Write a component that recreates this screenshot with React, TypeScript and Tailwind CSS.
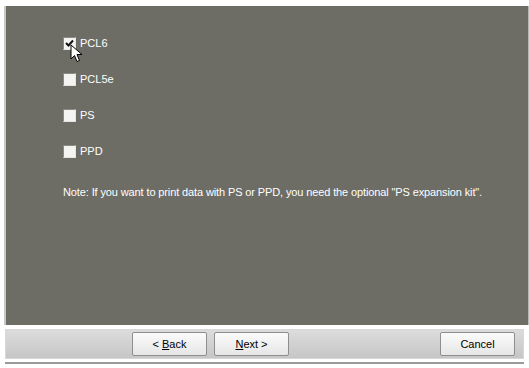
import React from "react";

function Box({ checked }: { checked?: boolean }) {
  return (
    <span className="relative flex h-[13px] w-[13px] shrink-0 items-center justify-center border border-t-[#8a8a85] border-l-[#8a8a85] border-r-[#e4e4e0] border-b-[#e4e4e0] bg-[#f4f4f2]">
      {checked && (
        <svg width="9" height="9" viewBox="0 0 9 9">
          <path d="M1 4 L3.5 6.5 L8 1.5" stroke="#111" strokeWidth="2" fill="none" />
        </svg>
      )}
    </span>
  );
}

function Option({ label, checked }: { label: string; checked?: boolean }) {
  return (
    <div className="flex h-[13px] items-center gap-[4px] text-[11px] leading-[13px] text-white">
      <Box checked={checked} />
      <span>{label}</span>
    </div>
  );
}

function Btn({ children }: { children: React.ReactNode }) {
  return (
    <button className="flex h-[24px] w-[75px] items-center justify-center rounded-[2px] border border-[#8e8e8e] bg-gradient-to-b from-[#fbfbfb] to-[#e6e6e6] text-[11px] text-black">
      {children}
    </button>
  );
}

export default function App() {
  return (
    <div
      className="relative h-[368px] w-[529px] overflow-hidden bg-white"
      style={{ fontFamily: "Tahoma, 'Liberation Sans', Arial, sans-serif" }}
    >
      <div className="flex h-[325px] pt-[6px] pl-[4px]">
        <div className="w-[2px] bg-[#c8c8c4]" />
        <div className="flex flex-1 flex-col bg-[#6d6d66] pl-[57px] pt-[31px]">
          <div className="flex flex-col gap-[23px]">
            <Option label="PCL6" checked />
            <Option label="PCL5e" />
            <Option label="PS" />
            <Option label="PPD" />
          </div>
          <p className="mt-[28px] text-[11px] leading-[13px] tracking-[-0.12px] text-white">
            Note: If you want to print data with PS or PPD, you need the optional "PS expansion kit".
          </p>
        </div>
        <div className="w-[1px] bg-[#b8b8b4]" />
      </div>
      <div className="mx-[5px] mt-[4px] flex h-[30px] items-center border border-[#d8d8d8] bg-gradient-to-b from-[#dcdcdc] to-[#c6c6c6] pr-[8px]">
        <div className="ml-[126px] flex gap-[7px]">
          <Btn>
            &lt; <span className="ml-[3px] underline">B</span>ack
          </Btn>
          <Btn>
            <span className="underline">N</span>ext &gt;
          </Btn>
        </div>
        <div className="ml-auto">
          <Btn>Cancel</Btn>
        </div>
      </div>
      <div className="mx-[5px] mt-[3px] h-[2px] bg-[#9a9a9a]" />
      <svg className="absolute left-[70px] top-[44px]" width="14" height="20" viewBox="0 0 14 20">
        <path d="M1 1 L1 15 L4.5 11.5 L7 17.5 L9.5 16.5 L7 10.5 L12 10.5 Z" fill="white" stroke="black" strokeWidth="1" />
      </svg>
    </div>
  );
}
